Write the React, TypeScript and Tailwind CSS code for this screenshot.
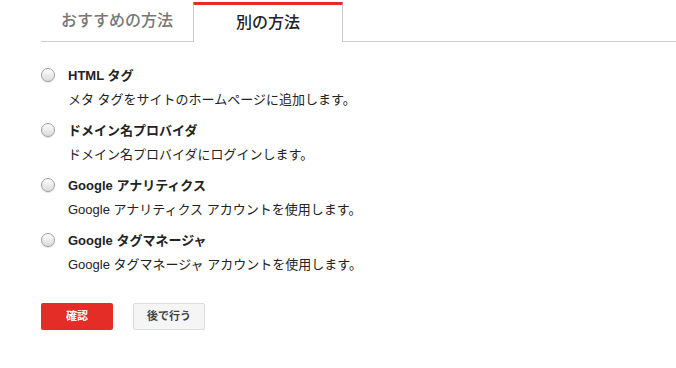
const FONT = "font-['Liberation_Sans','Noto_Sans_CJK_JP',sans-serif]";

const options = [
  { title: "HTML タグ", desc: "メタ タグをサイトのホームページに追加します。" },
  { title: "ドメイン名プロバイダ", desc: "ドメイン名プロバイダにログインします。" },
  { title: "Google アナリティクス", desc: "Google アナリティクス アカウントを使用します。" },
  { title: "Google タグマネージャ", desc: "Google タグマネージャ アカウントを使用します。" },
];

function Radio() {
  return (
    <span className="mt-[1px] h-[14px] w-[14px] shrink-0 rounded-full border border-[#9f9f9f] bg-gradient-to-b from-[#fdfdfd] to-[#dcdcdc] shadow-[0_1px_1px_rgba(0,0,0,0.12)]" />
  );
}

export default function App() {
  return (
    <div className={`${FONT} min-h-[368px] w-[676px] bg-white pl-[41px] pt-[2px] text-[#222]`}>
      <div className="flex h-[40px] border-b border-[#cccccc]">
        <div className="flex w-[152px] items-center justify-center pb-[2px] text-[16px] font-medium text-[#777]">
          おすすめの方法
        </div>
        <div className="-mb-px flex w-[150px] items-center justify-center border-x border-t-[3px] border-[#cccccc] border-t-[#e52d27] bg-white pb-[1px] text-[16px] font-medium text-[#222]">
          別の方法
        </div>
      </div>

      <div className="mt-[25px] flex flex-col gap-[13px]">
        {options.map((o) => (
          <div key={o.title} className="flex flex-col gap-[6px]">
            <label className="flex items-start gap-[13px] text-[13px] font-bold leading-[18px]">
              <Radio />
              <span>{o.title}</span>
            </label>
            <p className="pl-[27px] text-[13px] leading-[18px]">{o.desc}</p>
          </div>
        ))}
      </div>

      <div className="mt-[29px] flex gap-[20px]">
        <button className="h-[27px] w-[72px] rounded-[2px] bg-[#e52d27] text-[11px] font-bold text-white">
          確認
        </button>
        <button className="h-[27px] w-[72px] rounded-[2px] border border-[#dcdcdc] bg-[#f5f5f5] text-[11px] font-bold text-[#444]">
          後で行う
        </button>
      </div>
    </div>
  );
}
